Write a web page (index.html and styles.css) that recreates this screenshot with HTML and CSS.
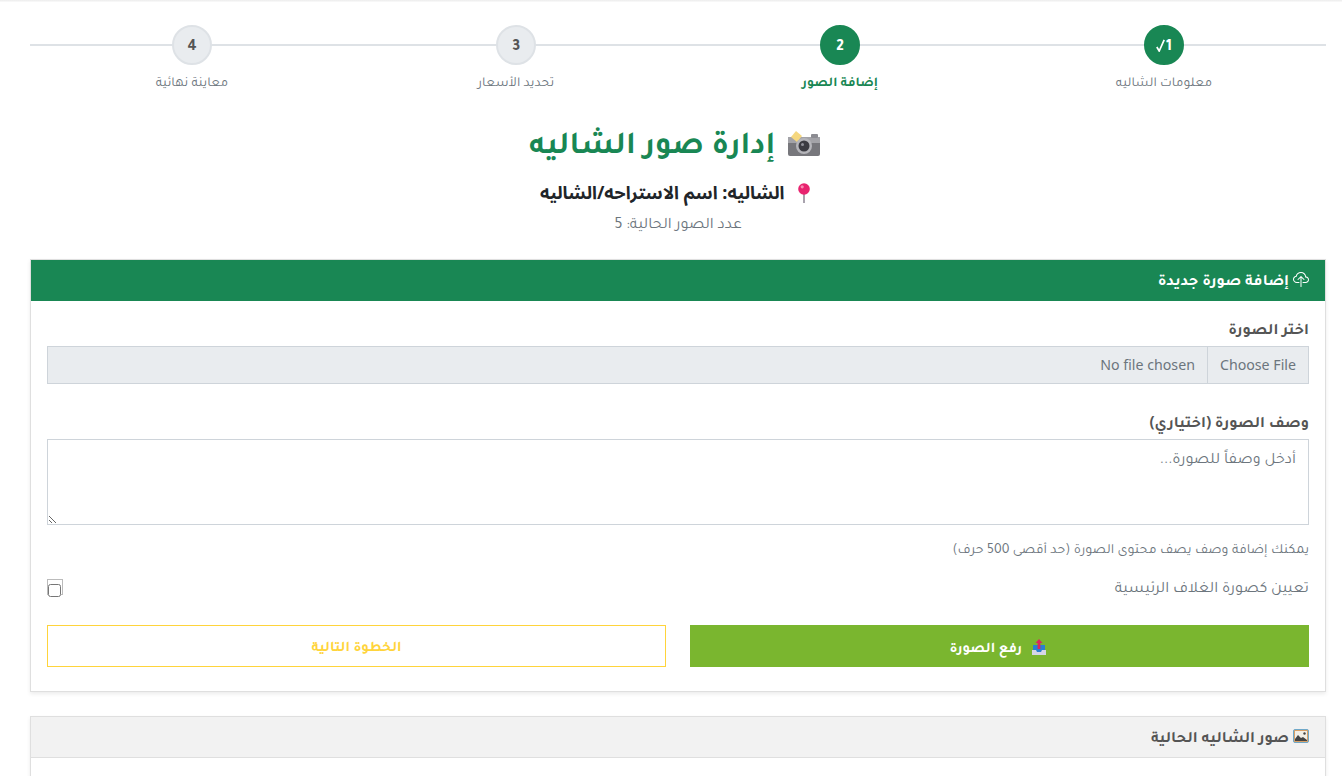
FILE: index.html
```html
<!DOCTYPE html>
<html lang="ar" dir="rtl">
<head>
    <meta charset="UTF-8">
    <meta name="viewport" content="width=device-width, initial-scale=1.0">
    <title>إدارة صور الشاليه</title>
    <link rel="stylesheet" href="styles.css">
</head>
<body>
    <div class="top-shadow"></div>
    <div class="container">
        <div class="steps">
            <div class="step done">
                <div class="step-circle">
                    <svg class="check" viewBox="0 0 9 13"><path d="M0.8 8 L3.2 12 L8.2 0.8" fill="none" stroke="white" stroke-width="1.7"/></svg>
                    <span>1</span>
                </div>
                <div class="step-label">معلومات الشاليه</div>
            </div>
            <div class="step active">
                <div class="step-circle">2</div>
                <div class="step-label">إضافة الصور</div>
            </div>
            <div class="step">
                <div class="step-circle">3</div>
                <div class="step-label">تحديد الأسعار</div>
            </div>
            <div class="step">
                <div class="step-circle">4</div>
                <div class="step-label">معاينة نهائية</div>
            </div>
        </div>

        <div class="page-head">
            <h2>
                <svg class="emoji-camera" viewBox="0 0 34 26">
                    <rect x="1" y="6" width="32" height="19" rx="2" fill="#77777c"/>
                    <rect x="1" y="6" width="32" height="6" fill="#a3a3a8"/>
                    <rect x="24" y="3" width="7" height="4" rx="1" fill="#8c8c92"/>
                    <path d="M9 0l6 5-5 6-6-5z" fill="#f5d77f"/>
                    <circle cx="17" cy="15" r="8" fill="#b5b5ba"/>
                    <circle cx="17" cy="15" r="5.5" fill="#3b3b42"/>
                    <circle cx="15.5" cy="13.5" r="1.5" fill="#8f8f98"/>
                </svg>
                إدارة صور الشاليه
            </h2>
            <h4>
                <svg class="emoji-pin" viewBox="0 0 12 20">
                    <rect x="5" y="9" width="2" height="11" fill="#a9a3ae"/>
                    <circle cx="6" cy="6" r="5.8" fill="#e8236f"/>
                    <circle cx="4.2" cy="3.8" r="1.6" fill="#f88bb3"/>
                </svg>
                الشاليه: اسم الاستراحه/الشاليه
            </h4>
            <p class="count">عدد الصور الحالية: 5</p>
        </div>

        <div class="card">
            <div class="card-header green">
                <svg class="icon" viewBox="0 0 16 16" fill="currentColor">
                    <path fill-rule="evenodd" d="M4.406 1.342A5.53 5.53 0 0 1 8 0c2.69 0 4.923 2 5.166 4.579C14.758 4.804 16 6.137 16 7.773 16 9.569 14.502 11 12.687 11H10a.5.5 0 0 1 0-1h2.688C13.979 10 15 8.988 15 7.773c0-1.216-1.02-2.228-2.313-2.228h-.5v-.5C12.188 2.825 10.328 1 8 1a4.53 4.53 0 0 0-2.941 1.1c-.757.652-1.153 1.438-1.153 2.055v.448l-.445.049C2.064 4.805 1 5.952 1 7.318 1 8.785 2.23 10 3.781 10H6a.5.5 0 0 1 0 1H3.781C1.708 11 0 9.366 0 7.318c0-1.763 1.266-3.223 2.942-3.593.143-.863.698-1.723 1.464-2.383z"/>
                    <path fill-rule="evenodd" d="M7.646 4.146a.5.5 0 0 1 .708 0l3 3a.5.5 0 0 1-.708.708L8.5 5.707V14.5a.5.5 0 0 1-1 0V5.707L5.354 7.854a.5.5 0 1 1-.708-.708l3-3z"/>
                </svg>
                <span class="card-title">إضافة صورة جديدة</span>
            </div>
            <div class="card-body">
                <div class="field file-field">
                    <label for="photo">اختر الصورة</label>
                    <input type="file" id="photo" class="file-input">
                </div>
                <div class="field desc-field">
                    <label for="desc">وصف الصورة (اختياري)</label>
                    <textarea id="desc" class="desc-input" placeholder="أدخل وصفاً للصورة..."></textarea>
                    <div class="help">يمكنك إضافة وصف يصف محتوى الصورة (حد أقصى 500 حرف)</div>
                </div>
                <div class="check-row">
                    <label for="cover">تعيين كصورة الغلاف الرئيسية</label>
                    <span class="check-box"><input type="checkbox" id="cover"></span>
                </div>
                <div class="actions">
                    <button class="btn btn-upload">
                        <svg class="emoji-tray" viewBox="0 0 14 16">
                            <path d="M1 6h12v8H1z" fill="#2a7fd0"/>
                            <path d="M0 11h4l1 2h4l1-2h4v5H0z" fill="#d5d6e6"/>
                            <path d="M7 0l3.5 4H8.4v6H5.6V4H3.5z" fill="#d9275f"/>
                        </svg>
                        رفع الصورة
                    </button>
                    <button class="btn btn-next">الخطوة التالية</button>
                </div>
            </div>
        </div>

        <div class="card">
            <div class="card-header gray">
                <svg class="icon" viewBox="0 0 16 16">
                    <rect x="0.5" y="1.5" width="15" height="13" rx="1.5" fill="#d9a066" stroke="#6fa8c9"/>
                    <rect x="2" y="3" width="12" height="10" fill="#f3efe6"/>
                    <circle cx="11.5" cy="5.5" r="1.2" fill="#444"/>
                    <path d="M2 13v-2l3-4 3 3 2-1 4 3v1z" fill="#444"/>
                </svg>
                <span class="card-title">صور الشاليه الحالية</span>
            </div>
            <div class="card-body empty"></div>
        </div>
    </div>
</body>
</html>
```

FILE: styles.css
```css
* {
    box-sizing: border-box;
}
body {
    margin: 0;
    font-family: Tajawal, "Noto Sans", sans-serif;
    font-size: 16px;
    color: #212529;
    background: white;
    overflow-x: hidden;
}
.top-shadow {
    height: 2px;
    background: linear-gradient(#ececec, #fbfbfb);
}
.container {
    padding: 23px 16px 0 30px;
}

/* steps */
.steps {
    display: flex;
    background: linear-gradient(#dee2e6, #dee2e6) no-repeat 0 19px / 100% 2px;
}
.step {
    flex: 1;
    display: flex;
    flex-direction: column;
    align-items: center;
}
.step-circle {
    width: 40px;
    height: 40px;
    padding-top: 6px;
    border-radius: 50%;
    border: 2px solid #dee2e6;
    background: #e9ecef;
    color: #555;
    font-size: 16px;
    font-weight: bold;
    display: flex;
    align-items: center;
    justify-content: center;
    gap: 1px;
    direction: ltr;
}
.check {
    width: 9px;
    height: 13px;
    margin-bottom: 6px;
}
.step-label {
    margin-top: 7px;
    font-size: 13.6px;
    line-height: 24px;
    color: #6c757d;
}
.step.done .step-circle, .step.active .step-circle {
    background: #198754;
    border-color: #198754;
    color: white;
}
.step.active .step-label {
    color: #198754;
    font-weight: bold;
}

/* heading */
.page-head {
    text-align: center;
    margin-top: 32px;
    margin-bottom: 22px;
}
.page-head h2 {
    margin: 0;
    font-size: 32px;
    line-height: 40px;
    font-weight: bold;
    color: #198754;
}
.page-head h4 {
    margin: 13px 0 0;
    font-family: "Noto Sans Arabic", Tajawal, sans-serif;
    font-size: 18px;
    line-height: 24px;
    font-weight: bold;
}
.count {
    margin: 11px 0 0;
    font-size: 16px;
    line-height: 21px;
    color: #6c757d;
}
.emoji-camera {
    width: 34px;
    height: 26px;
    vertical-align: -4px;
    margin-left: 4px;
    margin-right: 6px;
}
.emoji-pin {
    width: 12px;
    height: 20px;
    vertical-align: -4px;
    margin-left: 9px;
    margin-right: 6px;
}
.emoji-tray {
    width: 14px;
    height: 16px;
    vertical-align: -3px;
    margin-left: 6px;
    margin-right: 4px;
}

/* cards */
.card {
    border: 1px solid #dfdfdf;
    box-shadow: 0 2px 4px rgba(0, 0, 0, 0.08);
    margin-bottom: 24px;
    background: white;
}
.card-header {
    height: 41px;
    padding: 0 16px 0 15px;
    display: flex;
    align-items: center;
    gap: 4px;
    font-size: 16px;
    font-weight: bold;
}
.card-title {
    padding-top: 6px;
}
.card-header.green {
    background: #198754;
    color: white;
}
.card-header.gray {
    background: #f2f2f2;
    border-bottom: 1px solid #dfdfdf;
    color: #555;
}
.icon {
    width: 16px;
    height: 16px;
    margin-bottom: 2px;
}
.card-body {
    padding: 17px 16px 16px;
}
.card-body.empty {
    height: 120px;
}

/* form */
.field label {
    display: block;
    font-size: 16px;
    line-height: 28px;
    font-weight: bold;
    color: #555;
}
.file-field {
    margin-bottom: 27px;
}
.file-input {
    display: block;
    width: 100%;
    height: 38px;
    border: 1px solid #ced4da;
    background: #e9ecef;
    color: #6c757d;
    font: 14.2px "Noto Sans", Tajawal, sans-serif;
    line-height: 36px;
}
.file-input::file-selector-button {
    height: 36px;
    padding: 0 12px;
    margin: 0 0 0 12px;
    border: 0;
    border-left: 1px solid #ced4da;
    background: #e9ecef;
    color: #6c757d;
    font: inherit;
}
.desc-input {
    display: block;
    width: 100%;
    height: 86px;
    padding: 9px 12px 6px;
    border: 1px solid #ced4da;
    border-radius: 0;
    font: 16px Tajawal, "Noto Sans", sans-serif;
    line-height: 24px;
}
.desc-input::placeholder {
    color: #6c757d;
}
.help {
    margin-top: 14px;
    font-size: 14px;
    line-height: 24px;
    color: #6c757d;
}
.check-row {
    display: flex;
    justify-content: space-between;
    align-items: center;
    margin-top: 14px;
    height: 21px;
    font-size: 16px;
    color: #6c757d;
}
.check-row label {
    padding-top: 6px;
}
.check-box {
    display: block;
    width: 16px;
    height: 16px;
    margin-bottom: 2px;
    border: 1px solid #bbb;
}
.check-box input {
    display: block;
    width: 13px;
    height: 13px;
    margin: 4px 1px 0 0;
}
.actions {
    display: flex;
    gap: 24px;
    margin-top: 27px;
    margin-bottom: 8px;
}
.btn {
    flex: 1;
    height: 42px;
    border-radius: 0;
    font: bold 14.6px Tajawal, "Noto Sans", sans-serif;
}
.btn-upload {
    padding-top: 6px;
    background: #7ab62f;
    border: 1px solid #7ab62f;
    color: white;
}
.btn-next {
    padding-top: 8px;
    background: white;
    border: 1px solid #ffd43b;
    color: #ffd43b;
}
```
